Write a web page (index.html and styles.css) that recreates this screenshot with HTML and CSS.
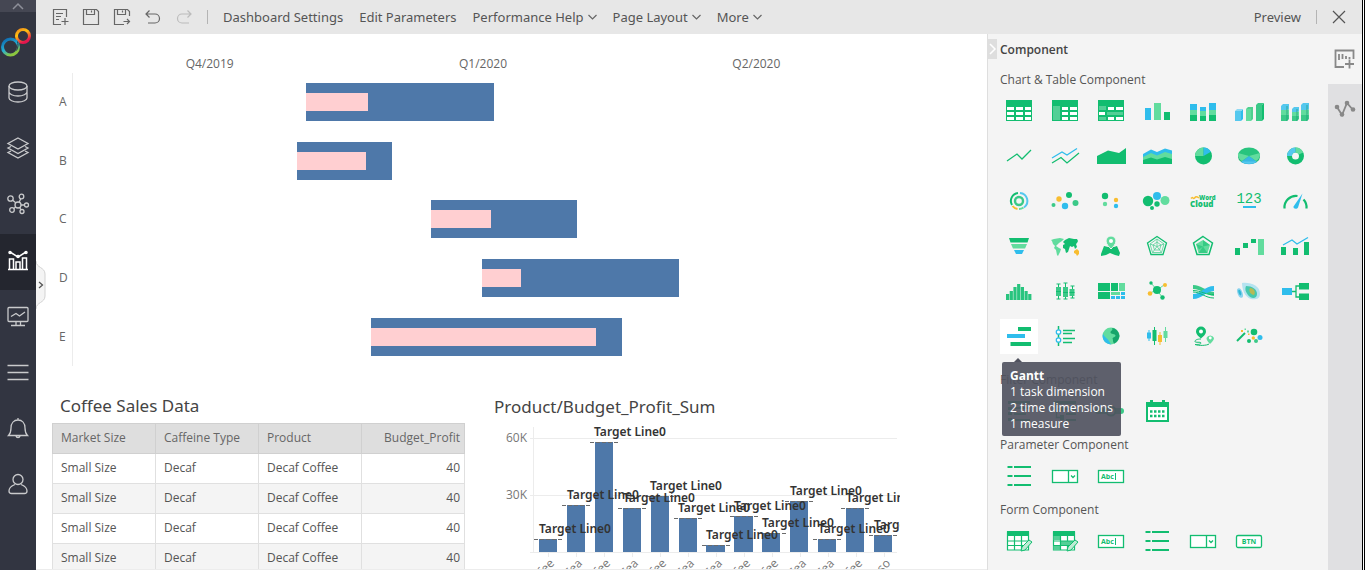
FILE: index.html
```
<!DOCTYPE html>
<html lang="en">
<head>
<meta charset="utf-8">
<title>Dashboard Editor</title>
<link rel="stylesheet" href="styles.css">
</head>
<body>
<div class="app">
  <nav class="sidebar" aria-label="Main">
    <button class="side-collapse" aria-label="Collapse"><svg width="14" height="8" viewBox="0 0 14 8"><path d="M2 7l5-5 5 5" fill="none" stroke="#8d8f99" stroke-width="1.5"/></svg></button>
    <a class="logo" href="#" aria-label="Home">
      <svg width="36" height="36" viewBox="0 0 36 36" fill="none">
        <defs>
          <linearGradient id="warm" x1="0" y1="0" x2=".5" y2="1"><stop offset="0" stop-color="#f08a1d"/><stop offset=".4" stop-color="#ffc20e"/><stop offset="1" stop-color="#e5154f"/></linearGradient>
          <linearGradient id="cool" x1="0" y1="0" x2=".5" y2="1"><stop offset="0" stop-color="#0d63ad"/><stop offset=".6" stop-color="#24b0d5"/><stop offset="1" stop-color="#8cc63f"/></linearGradient>
        </defs>
        <circle cx="23" cy="12" r="6.500" stroke="url(#warm)" stroke-width="3"/>
        <circle cx="10.500" cy="23" r="8" stroke="url(#cool)" stroke-width="3"/>
        <path d="M17.500 17.500c.8 2.500.8 6-1 9" stroke="#323541" stroke-width="1"/>
      </svg>
    </a>
    <a class="side-item" href="#" aria-label="Data source"><svg width="24" height="24" viewBox="0 0 24 24"><ellipse cx="12" cy="6" rx="9" ry="4"/><path d="M3 6v12c0 2 4 4 9 4s9-2 9-4V6M3 12c0 2 4 4 9 4s9-2 9-4"/></svg></a>
    <a class="side-item" href="#" aria-label="Data sets"><svg width="24" height="24" viewBox="0 0 24 24"><path d="M12 2l10 5.500-10 5.500L2 7.500zM5 10.500l-3 1.500 10 5.500L22 12l-3-1.500M5 15l-3 1.500L12 22l10-5.500-3-1.500"/></svg></a>
    <a class="side-item" href="#" aria-label="Mining"><svg width="24" height="24" viewBox="0 0 24 24"><circle cx="12" cy="13" r="3"/><circle cx="4.500" cy="6.500" r="2.700"/><circle cx="15.500" cy="4.500" r="2.300"/><circle cx="20.500" cy="13" r="2"/><circle cx="6" cy="18" r="2.300"/><circle cx="16" cy="19.500" r="2"/><path d="M6.700 8.300l3 2.500M14.700 6.800l-1.500 3.500M15 13h3.500M7.700 16.500l2-1.500M14.900 17.700L13.700 15.500"/></svg></a>
    <a class="side-item side-item--active" href="#" aria-label="Dashboards"><svg width="24" height="24" viewBox="0 0 24 24"><path d="M2 21.500h20M3.500 21V11h4v10M10 21v-7h4v7M16.500 21V10h4v11M4 4l8 5 8-5"/><circle cx="4" cy="4.500" r="1"/><circle cx="12" cy="8.500" r="1"/><circle cx="20" cy="4.500" r="1"/></svg></a>
    <a class="side-item" href="#" aria-label="Presentation"><svg width="24" height="24" viewBox="0 0 24 24"><rect x="2" y="3.500" width="20" height="14" rx="1"/><path d="M5 12.500l5-3 3.500 2.500L19 8M10 18v3M14.500 18v3M5 21.500h14"/></svg></a>
    <a class="side-item" href="#" aria-label="Menu"><svg width="24" height="24" viewBox="0 0 24 24"><path d="M1.500 5.500h21M1.500 12.500h21M1.500 19.500h21"/></svg></a>
    <a class="side-item" href="#" aria-label="Notifications"><svg width="24" height="24" viewBox="0 0 24 24"><path d="M2.500 19.500c2-2 2.500-3.500 2.500-7.500 0-5 3-8 7-8s7 3 7 8c0 4 .5 5.500 2.500 7.500zM10 20c.5 2 3.500 2 4 0M12 4V2"/></svg></a>
    <a class="side-item" href="#" aria-label="Account"><svg width="24" height="24" viewBox="0 0 24 24"><circle cx="12" cy="7.500" r="5"/><path d="M9 12.500c-4 1.500-6 4-6 6.500 0 1.500 1 2.500 2.500 2.500h13c1.500 0 2.500-1 2.500-2.500 0-2.500-2-5-6-6.500"/></svg></a>
    <button class="drawer" aria-label="Open drawer"><svg width="11" height="48" viewBox="0 0 11 48"><path d="M0 0c0 7 9 6 9 13v22c0 7-9 6-9 13" fill="#f4f4f4" stroke="#d2d2d2"/><path d="M3 21l3.500 3L3 27" fill="none" stroke="#555" stroke-width="1.300"/></svg></button>
  </nav>

  <div class="workspace">
    <header class="toolbar">
      <div class="tools">
        <button class="tool" aria-label="New"><svg width="18" height="18" viewBox="0 0 18 18"><path d="M15.500 9V1.500h-13v15H10M5 5.500h7M5 8.500h5M5 11.500h3M10.500 13.500h7M14 10v7"/></svg></button>
        <button class="tool" aria-label="Save"><svg width="18" height="18" viewBox="0 0 18 18"><path d="M1.500 1.500h13l2 2v13h-15zM4.500 1.500v5h8v-5M9.500 2.500v2"/></svg></button>
        <button class="tool" aria-label="Save as"><svg width="18" height="18" viewBox="0 0 18 18"><path d="M16.500 8V3.500l-2-2h-13v15H11M4.500 1.500v5h8v-5M9.500 2.500v2M10.500 13.500h6M14 11l2.500 2.500L14 16"/></svg></button>
        <button class="tool" aria-label="Undo"><svg width="18" height="18" viewBox="0 0 18 18"><path d="M5.500 2.500l-3.500 3.500 3.500 3.500M2 6h9a4.500 4.500 0 0 1 0 9H4"/></svg></button>
        <button class="tool tool--off" aria-label="Redo" disabled><svg width="18" height="18" viewBox="0 0 18 18"><path d="M12.500 2.500l3.500 3.500-3.500 3.500M16 6H7a4.500 4.500 0 0 0 0 9h7"/></svg></button>
      </div>
      <span class="rule"></span>
      <div class="menus">
        <button class="menu">Dashboard Settings</button>
        <button class="menu">Edit Parameters</button>
        <button class="menu">Performance Help <svg width="9" height="6" viewBox="0 0 9 6"><path d="M.5 1l4 4 4-4"/></svg></button>
        <button class="menu">Page Layout <svg width="9" height="6" viewBox="0 0 9 6"><path d="M.5 1l4 4 4-4"/></svg></button>
        <button class="menu">More <svg width="9" height="6" viewBox="0 0 9 6"><path d="M.5 1l4 4 4-4"/></svg></button>
      </div>
      <div class="toolbar-end">
        <button class="menu">Preview</button>
        <span class="rule"></span>
        <button class="close" aria-label="Close"><svg width="14" height="14" viewBox="0 0 14 14"><path d="M1 1l12 12M13 1L1 13" fill="none" stroke="#555" stroke-width="1.200"/></svg></button>
      </div>
    </header>

    <div class="editor">
      <main class="board">
        <section class="gantt" aria-label="Gantt chart">
          <div class="gantt-head"><span>Q4/2019</span><span>Q1/2020</span><span>Q2/2020</span></div>
          <div class="gantt-body">
            <div class="gantt-row"><span class="gantt-label">A</span><div class="track"><div class="bar" style="margin-left:28.4%;width:22.9%"><div class="done" style="width:33%"></div></div></div></div>
            <div class="gantt-row"><span class="gantt-label">B</span><div class="track"><div class="bar" style="margin-left:27.3%;width:11.6%"><div class="done" style="width:72.6%"></div></div></div></div>
            <div class="gantt-row"><span class="gantt-label">C</span><div class="track"><div class="bar" style="margin-left:43.7%;width:17.8%"><div class="done" style="width:41.1%"></div></div></div></div>
            <div class="gantt-row"><span class="gantt-label">D</span><div class="track"><div class="bar" style="margin-left:49.9%;width:24%"><div class="done" style="width:19.8%"></div></div></div></div>
            <div class="gantt-row"><span class="gantt-label">E</span><div class="track"><div class="bar" style="margin-left:36.3%;width:30.6%"><div class="done" style="width:90%"></div></div></div></div>
          </div>
        </section>

        <div class="widgets">
          <section class="sales">
            <h2 class="widget-title">Coffee Sales Data</h2>
            <table class="grid">
              <thead><tr><th>Market Size</th><th>Caffeine Type</th><th>Product</th><th class="num">Budget_Profit</th></tr></thead>
              <tbody>
                <tr><td>Small Size</td><td>Decaf</td><td>Decaf Coffee</td><td class="num">40</td></tr>
                <tr><td>Small Size</td><td>Decaf</td><td>Decaf Coffee</td><td class="num">40</td></tr>
                <tr><td>Small Size</td><td>Decaf</td><td>Decaf Coffee</td><td class="num">40</td></tr>
                <tr><td>Small Size</td><td>Decaf</td><td>Decaf Coffee</td><td class="num">40</td></tr>
              </tbody>
            </table>
          </section>

          <section class="profit">
            <h2 class="widget-title">Product/Budget_Profit_Sum</h2>
            <svg class="chart" viewBox="0 0 406 146" role="img" aria-label="Budget profit by product">
              <path d="M36 14.500H403M36 71.500H403M36 128.500H403M39.500 3V128" stroke="#ececec" fill="none"/>
              <path d="M54.500 129v4m28-4v4m28-4v4m28-4v4m28-4v4m28-4v4m28-4v4m28-4v4m28-4v4m28-4v4m28-4v4m28-4v4m28-4v4" stroke="#ececec" fill="none"/>
              <g class="axis" text-anchor="end"><text x="33" y="18">60K</text><text x="33" y="75">30K</text></g>
              <g fill="#4e78a9">
                <rect x="45" y="115" width="18" height="13"/><rect x="73" y="81" width="18" height="47"/><rect x="101" y="18" width="18" height="110"/><rect x="129" y="84" width="18" height="44"/><rect x="157" y="72" width="18" height="56"/><rect x="185" y="94" width="18" height="34"/><rect x="212" y="121" width="19" height="7"/><rect x="240" y="92" width="19" height="36"/><rect x="268" y="109" width="18" height="19"/><rect x="296" y="77" width="18" height="51"/><rect x="324" y="115" width="18" height="13"/><rect x="352" y="84" width="18" height="44"/><rect x="380" y="111" width="18" height="17"/>
              </g>
              <path d="M40 115.500h28M68 81.500h28M96 18.500h28M124 84.500h28M152 72.500h28M180 94.500h28M208 121.500h28M236 92.500h28M264 109.500h28M291 77.500h28M319 115.500h28M347 84.500h28M375 111.500h28" stroke="#6b6b6b" stroke-dasharray="4 2" fill="none"/>
              <g class="target">
                <text x="45" y="109">Target Line0</text><text x="73" y="75">Target Line0</text><text x="100" y="12">Target Line0</text><text x="129" y="78">Target Line0</text><text x="156" y="66">Target Line0</text><text x="184" y="88">Target Line0</text><text x="212" y="115">Target Line0</text><text x="240" y="86">Target Line0</text><text x="268" y="103">Target Line0</text><text x="296" y="71">Target Line0</text><text x="324" y="109">Target Line0</text><text x="352" y="78">Target Line0</text><text x="380" y="105">Target Line0</text>
              </g>
              <g class="axis" text-anchor="end" transform="translate(1 -3)">
                <text transform="translate(60 143) rotate(-45)">Coffee</text><text transform="translate(88 143) rotate(-45)">Tea</text><text transform="translate(116 143) rotate(-45)">Coffee</text><text transform="translate(144 143) rotate(-45)">Tea</text><text transform="translate(172 143) rotate(-45)">Coffee</text><text transform="translate(200 143) rotate(-45)">Tea</text><text transform="translate(228 143) rotate(-45)">Tea</text><text transform="translate(256 143) rotate(-45)">Coffee</text><text transform="translate(284 143) rotate(-45)">Coffee</text><text transform="translate(312 143) rotate(-45)">Tea</text><text transform="translate(340 143) rotate(-45)">Tea</text><text transform="translate(368 143) rotate(-45)">Coffee</text><text transform="translate(396 143) rotate(-45)">Espresso</text>
              </g>
            </svg>
          </section>
        </div>
      </main>

      <aside class="panel">
        <button class="panel-fold" aria-label="Fold panel"><svg width="9" height="20" viewBox="0 0 9 20"><path d="M2 5l5 5-5 5" fill="none" stroke="#fff" stroke-width="1.500"/></svg></button>
        <h2 class="panel-title">Component</h2>

        <section class="group group--charts">
          <h3 class="group-title">Chart &amp; Table Component</h3>
          <div class="icons">
            <button class="cell" aria-label="Table"><svg viewBox="0 0 38 35"><path class="g" d="M6 6h26v21H6z"/><path fill="#fff" d="M7 13h7v3H7zm9 0h7v3h-7zm9 0h6v3h-6zM7 18h7v3H7zm9 0h7v3h-7zm9 0h6v3h-6zM7 23h7v3H7zm9 0h7v3h-7zm9 0h6v3h-6z"/></svg></button>
            <button class="cell" aria-label="Crosstab"><svg viewBox="0 0 38 35"><path class="g" d="M6 6h26v21H6z"/><path fill="#53cf96" d="M7 12h7v14H7z"/><path fill="#fff" d="M16 13h6v3h-6zm8 0h7v3h-7zM16 18h6v3h-6zm8 0h7v3h-7zM16 23h6v3h-6zm8 0h7v3h-7z"/></svg></button>
            <button class="cell" aria-label="Free-form table"><svg viewBox="0 0 38 35"><path class="g" d="M6 6h26v21H6z"/><path fill="#53cf96" d="M7 12h7v4H7zM15 18h16v3H15zM7 23h7v3H7z"/><path fill="#fff" d="M16 13h6v3h-6zm8 0h7v3h-7zM7 18h6v3H7zM16 23h6v3h-6zm8 0h7v3h-7z"/></svg></button>
            <button class="cell" aria-label="Bar"><svg viewBox="0 0 38 35"><path class="b" d="M7 14h6v12H7z"/><path class="l" d="M16 9h7v17h-7z"/><path class="g" d="M26 18h6v8h-6z"/></svg></button>
            <button class="cell" aria-label="Stacked bar"><svg viewBox="0 0 38 35"><path class="b" d="M6 10h7v6H6zM16 13h6v4h-6zM25 9h7v7h-7z"/><path class="l" d="M6 16h7v5H6zM16 17h6v5h-6zM25 16h7v5h-7z"/><path class="g" d="M6 21h7v6H6zM16 22h6v5h-6zM25 21h7v6h-7z"/></svg></button>
            <button class="cell" aria-label="3D bar"><svg viewBox="0 0 38 35"><path fill="#55c8ee" d="M5 17h6v10H5z"/><path class="b" d="M11 17l2-2v10l-2 2z"/><path fill="#8ed9f3" d="M5 17l2-2h6l-2 2z"/><path class="l" d="M16 15h5v12h-5z"/><path fill="#4fd08f" d="M21 15l2-2v12l-2 2zM16 15l2-2h5l-2 2z"/><path fill="#3bc988" d="M26 11h6v16h-6zM26 11l2-2h6l-2 2z"/><path class="g" d="M32 11l2-2v16l-2 2z"/></svg></button>
            <button class="cell" aria-label="3D stacked bar"><svg viewBox="0 0 38 35"><path fill="#3bc988" d="M5 21h6l2-1v5l-2 2H5zM16 22h5l2-1v4l-2 2h-5zM25 21h6l2-1v5l-2 2h-6z"/><path class="l" d="M5 16h6l2-1v5l-2 1H5zM16 18h5l2-1v4l-2 1h-5zM25 16h6l2-1v5l-2 1h-6z"/><path fill="#55c8ee" d="M5 12l2-2h6v5l-2 1H5zM16 15l2-2h5v4l-2 1h-5zM25 11l2-2h6v6l-2 1h-6z"/><path fill="none" stroke="#119b77" stroke-width=".7" d="M11 12v15M21 15v12M31 11v16"/></svg></button>

            <button class="cell" aria-label="Line"><svg viewBox="0 0 38 35"><path class="gs" d="M7 22l10-7 5 5 9-9"/></svg></button>
            <button class="cell" aria-label="Multi-line"><svg viewBox="0 0 38 35"><path class="bs" d="M6 19l10-6 5 3 10-6.500"/><path class="gs" d="M6 24l9-5.500 6 5.500 12-10"/></svg></button>
            <button class="cell" aria-label="Area"><svg viewBox="0 0 38 35"><path class="g" d="M5 17l11-5.500 11 2.500 7-5v16H5z"/></svg></button>
            <button class="cell" aria-label="Stacked area"><svg viewBox="0 0 38 35"><path class="b" d="M5 15l8-4.500 6 2.500 8-3.500 7 2v13H5z"/><path class="l" d="M5 18l8-4 6 2.500 8-3.500 7 2V25H5z"/><path class="g" d="M5 21l8-2.500 6 2 8-2.500 7 2v5H5z"/></svg></button>
            <button class="cell" aria-label="Pie"><svg viewBox="0 0 38 35"><circle class="g" cx="19.500" cy="17" r="8.500"/><path class="l" d="M19.500 17H11a8.500 8.500 0 0 1 8.500-8.500z"/><path class="b" d="M19.500 17V8.500a8.500 8.500 0 0 1 7.400 4.300z"/></svg></button>
            <button class="cell" aria-label="3D pie"><svg viewBox="0 0 38 35"><ellipse fill="#28b777" cx="19" cy="18" rx="11" ry="7"/><ellipse fill="#28c47e" cx="19" cy="16" rx="11" ry="7.500"/><path class="l" d="M19 17l11-3c.5 4-2 7-4 8zM19 17L8 14c-.5 4 2 7 4 8z"/><path fill="#38b7e3" d="M19 17l8 6c-5 3-11 3-16 0z"/><path fill="#55c8ee" d="M11.500 22.500h15c-4 3-11 3-15 0z"/></svg></button>
            <button class="cell" aria-label="Donut"><svg viewBox="0 0 38 35" fill="none" stroke-width="5"><circle cx="19.500" cy="17" r="6" stroke="#12bd70"/><path d="M19.500 11a6 6 0 0 1 5.500 3.500" stroke="#62dc9e"/><path d="M13.500 17a6 6 0 0 1 6-6" stroke="#55c8ee"/></svg></button>

            <button class="cell" aria-label="Sunburst"><svg viewBox="0 0 38 35" fill="none"><circle cx="19" cy="17" r="4" stroke="#3bc988" stroke-width="2.400"/><path d="M18 9a8 8 0 0 0-6 12" stroke="#12bd70" stroke-width="2"/><path d="M20 9a8 8 0 0 1 4 14.500" stroke="#55c8ee" stroke-width="2"/><path d="M12.500 22a8 8 0 0 0 5 3" stroke="#f8bd30" stroke-width="2"/><path d="M19 25a8 8 0 0 0 4.500-1.500" stroke="#62dc9e" stroke-width="2"/></svg></button>
            <button class="cell" aria-label="Scatter"><svg viewBox="0 0 38 35"><circle fill="#3bc988" cx="7.500" cy="21" r="2"/><circle class="y" cx="13" cy="15" r="2.700"/><circle class="g" cx="23" cy="11" r="3"/><circle class="b" cx="19" cy="22" r="3.200"/><circle fill="#3bc988" cx="29.500" cy="19" r="3"/></svg></button>
            <button class="cell" aria-label="Dot plot"><svg viewBox="0 0 38 35"><circle class="g" cx="13" cy="12" r="3.200"/><circle class="l" cx="13" cy="20" r="2.200"/><circle class="y" cx="24" cy="16" r="2.200"/><circle class="b" cx="24" cy="22" r="2.200"/></svg></button>
            <button class="cell" aria-label="Bubble"><svg viewBox="0 0 38 35"><circle class="g" cx="10" cy="17" r="5.200"/><circle class="b" cx="19" cy="12" r="4"/><circle class="l" cx="27" cy="16.500" r="4.500"/><circle class="g" cx="19" cy="20" r="2.700"/><circle class="g" cx="14" cy="24" r="2"/></svg></button>
            <button class="cell" aria-label="Word cloud"><svg viewBox="0 0 38 35"><path d="M7 14.500q1-1.500 2-.5t2-.5 4 .5" fill="none" stroke="#f8bd30" stroke-width="1.500"/><text class="word" x="15" y="16" font-size="6">Word</text><text class="word" x="6" y="23" font-size="8">Cloud</text></svg></button>
            <button class="cell" aria-label="KPI"><svg viewBox="0 0 38 35"><text class="kpi" x="19" y="19" text-anchor="middle">123</text><path class="b" d="M13 22h13v2H13z"/></svg></button>
            <button class="cell" aria-label="Gauge"><svg viewBox="0 0 38 35"><path d="M8.500 24.500a11.500 11.500 0 0 1 13-12.500M27.500 15.500a11.500 11.500 0 0 1 3 9" fill="none" stroke="#12bd70" stroke-width="2.200"/><path class="b" d="M26.500 9.500L22 23.500c-1 2-5 1.500-4.500-1z"/></svg></button>

            <button class="cell" aria-label="Funnel"><svg viewBox="0 0 38 35"><path class="g" d="M9 9h20l-1.500 4.500h-17z"/><path class="l" d="M11 15h16l-2 4.500H13z"/><path class="b" d="M14 21h10l-2 4h-6z"/></svg></button>
            <button class="cell" aria-label="World map"><svg viewBox="0 0 38 35"><path class="l" d="M5 11l3-1 6-1 4 1-2 2-3 2-2 2-1 1 3 2 2 1-1 3-2 4-1-1-1-5-2-2 1-2-2-2-1-3z"/><path class="g" d="M17 13l2-2 4-2 5 1 3 0 1 2-1 2-1 1 1 3-2 2-1-3-2 1-2-1-1 3-1 3-2 1-1-4-2-1v-3l2-1z"/><path class="y" d="M28 22l3-2 2 2v3l-2 2-1-2-2-1z"/></svg></button>
            <button class="cell" aria-label="Map"><svg viewBox="0 0 38 35"><path class="g" d="M12 17l4 1 6 0 3-1 3 7-1 3-4-1-5-2-4 2-5 1v-2z"/><path d="M14 12a5 5 0 0 1 10 0c0 3-3 6-5 8-2-2-5-5-5-8z" fill="#62dc9e" stroke="#f4f4f4"/><circle cx="19" cy="12" r="2" fill="#fff"/></svg></button>
            <button class="cell" aria-label="Radar"><svg viewBox="0 0 38 35" fill="none" stroke="#12bd70"><path d="M19 7.500l9.500 6.500-3.500 11.500H13L9.500 14z" stroke-width="1.300"/><path d="M19 10l7 5-2.500 8.500h-9L12 15zM19 13l4 3-1.500 5h-5L15 16zM19 10v7.500l7-2.500M19 17.500l4.500 6M19 17.500l-4.500 6M19 17.500L12 15" stroke="#53cf96" stroke-width=".8"/></svg></button>
            <button class="cell" aria-label="Filled radar"><svg viewBox="0 0 38 35"><path d="M19 7.500l9.500 6.500-3.500 11.500H13L9.500 14z" fill="none" stroke="#12bd70" stroke-width="1.500"/><path fill="#62dc9e" d="M19 11l7 5-2.500 8h-9L12 15z"/><path class="g" d="M19 11l7 5-7 1.500zM19 17.500l4.500 6.500h-9zM12 15l7 2.500-4 3z" opacity=".55"/></svg></button>
            <button class="cell" aria-label="Waterfall"><svg viewBox="0 0 38 35"><path class="g" d="M5 19h5v7H5zM13 14h5v5h-5zM21 10h5v4h-5z"/><path class="l" d="M28 10h6v16h-6z"/></svg></button>
            <button class="cell" aria-label="Combination"><svg viewBox="0 0 38 35"><path class="g" d="M5 18h5v8H5zM17 19h5v7h-5zM28 13h5v13h-5z"/><path class="bs" d="M7 16l9-5 5 4 11-6.500"/></svg></button>

            <button class="cell" aria-label="Histogram"><svg viewBox="0 0 38 35"><path fill="#28c47e" d="M6 20h3.200v6H6zM9.700 17h3.200v9H9.700zM13.400 13h3.200v13h-3.200zM17.100 10h3.200v16h-3.200zM20.800 13H24v13h-3.200zM24.500 17h3.200v9h-3.200zM28.200 20h3.200v6h-3.200z"/></svg></button>
            <button class="cell" aria-label="Box plot"><svg viewBox="0 0 38 35"><path d="M10.500 10h4M10.500 25h4M12.500 10v15M17.500 9h4M17.500 25h4M19.500 9v16M24.500 12h4M24.500 24h4M26.500 12v12" fill="none" stroke="#12bd70"/><path fill="#3bc988" d="M10 13h5v9h-5zM17 13h5v10h-5zM23.500 15h5v7h-5z"/><path d="M10 17.500h5M17 18.500h5M23.500 18.500h5" stroke="#12bd70"/></svg></button>
            <button class="cell" aria-label="Treemap"><svg viewBox="0 0 38 35"><path class="g" d="M6 9h12v8H6zM19 9h7v8h-7zM6 18h12v7H6z"/><path class="l" d="M27 9h6v8h-6zM19 18h9v3h-9z"/><path class="b" d="M29 18h4v3h-4zM19 22h4v3h-4zM24 22h4v3h-4zM29 22h4v3h-4z"/></svg></button>
            <button class="cell" aria-label="Network"><svg viewBox="0 0 38 35"><path d="M13 9l6 7 7-5M12 19l7-3 5 7" fill="none" stroke="#62dc9e"/><circle class="g" cx="19" cy="16" r="4"/><circle class="g" cx="13" cy="9" r="1.700"/><circle class="y" cx="27" cy="11" r="2"/><circle class="y" cx="12" cy="19.500" r="2.300"/><circle class="g" cx="24.500" cy="23.500" r="2.200"/></svg></button>
            <button class="cell" aria-label="Sankey"><svg viewBox="0 0 38 35"><path fill="#3bc988" d="M9 11c8 0 13 6 21 7v4C22 21 17 15 9 15z"/><path class="b" d="M9 20c8 0 12-8 21-8v5c-8 0-12 8-21 8z"/><path d="M9 18c8 0 12 6 21 6M9 16.500c8 0 14 5 21 4" fill="none" stroke="#12bd70"/></svg></button>
            <button class="cell" aria-label="Contour"><svg viewBox="0 0 38 35"><path fill="#b5e3f0" d="M12 9c8-1 18 2 18 11 0 5-5 6-9 5-7-2-9-11-9-16z"/><path fill="#45c8ad" d="M16 12c6 0 11 3 11 8s-6 5-9 1-3-6-2-9z"/><path fill="#b5ba55" d="M20 14c4 0 6 4 4 7-3 0-6-4-4-7z"/><ellipse cx="10" cy="19" rx="2.500" ry="5" fill="#8bd3ee" transform="rotate(-20 10 19)"/><ellipse cx="10" cy="18.500" rx="1.300" ry="3" fill="#30b8d5" transform="rotate(-20 10 19)"/></svg></button>
            <button class="cell" aria-label="Tree"><svg viewBox="0 0 38 35"><path class="gs" d="M16 17.500h4M24 12h-4v11h4"/><path class="b" d="M6 14h10v7H6z"/><path class="g" d="M23 9h10v6.500H23zM23 19.500h10V26H23z"/></svg></button>

            <button class="cell cell--active" aria-label="Gantt" aria-describedby="tip"><svg viewBox="0 0 38 35"><path class="g" d="M18 8h13v4H18zM10.500 23H31v4H10.500z"/><path class="b" d="M7 15h18v4H7z"/></svg></button>
            <button class="cell" aria-label="Timeline"><svg viewBox="0 0 38 35"><path d="M12.500 7v20" stroke="#12bd70" stroke-width="1.500"/><path d="M17 11.500h12M17 14.500h9M17 19.500h12M17 23.500h9" stroke="#12bd70" stroke-width="1.300"/><g fill="#fff" stroke="#2fbdec" stroke-width="1.300"><circle cx="12.500" cy="13" r="2.200"/><circle cx="12.500" cy="21" r="2.200"/></g></svg></button>
            <button class="cell" aria-label="Globe"><svg viewBox="0 0 38 35"><circle class="l" cx="19" cy="17" r="8.500"/><path class="b" d="M11 14.500c1 4 5 4 8 11-6-1-9.500-5-8-11z"/><path fill="#16a56b" d="M20 9c4 0 7 4 7.500 8-.5 3-2 6-5 7.500-2-1-1-3-2-5 1-2 3-1 3-3s-5-1-5-3 3-2 1.500-4.500z"/></svg></button>
            <button class="cell" aria-label="Candlestick"><svg viewBox="0 0 38 35"><path class="b" d="M10.500 11h1v11h-1zM9 13.500h4v6H9z"/><path class="g" d="M16 8h1v18h-1zM14.500 11h4v11h-4z"/><path class="y" d="M21.500 13h1v13h-1zM20 16h4v7h-4z"/><path class="l" d="M27 8h1v15h-1zM25.500 12h4v7h-4z"/></svg></button>
            <button class="cell" aria-label="Route map"><svg viewBox="0 0 38 35"><path d="M12 12.500a5 5 0 0 1 10 0c0 3-3 5-5 7-2-2-5-4-5-7z" class="g"/><circle cx="17" cy="12.500" r="2" fill="#fff"/><path d="M22.500 19a4 4 0 0 1 7.500 0c0 2-2 4-4 6-2-2-3.500-4-3.500-6z" class="l"/><circle cx="26.300" cy="19" r="1.400" fill="#fff"/><path d="M17 20c-4 0-6 1-6 2.500s6 0 6 1.500-4 1.500-6 1.500c4 1.500 12 1 14-.5" fill="none" stroke="#12bd70"/></svg></button>
            <button class="cell" aria-label="Custom chart"><svg viewBox="0 0 38 35"><path d="M7 22l8-8" stroke="#12bd70" stroke-width="2"/><path class="y" d="M11 11h2v2h-2zM18 14.500h1.500V16H18z"/><path class="l" d="M14.500 9.500H16V11h-1.500zM17 11.500h2v2h-2z"/><circle class="g" cx="24" cy="13" r="3.300"/><circle class="y" cx="23.300" cy="19" r="1.700"/><circle class="b" cx="30" cy="18.500" r="2.500"/><circle class="g" cx="19" cy="22" r="2"/><circle fill="#3bc988" cx="26" cy="22" r="2"/></svg></button>
          </div>
          <div class="tip" id="tip" role="tooltip"><strong>Gantt</strong><br>1 task dimension<br>2 time dimensions<br>1 measure</div>
        </section>

        <section class="group">
          <h3 class="group-title">Filter Component</h3>
          <div class="icons">
            <button class="cell" aria-label="List filter"><svg viewBox="0 0 38 35"><path class="g" d="M8 7h22v3H8zM8 13h4v3H8zM14 13h16v2H14zM8 18h4v3H8zM14 19h12v2H14zM8 24h4v3H8zM14 25h16v2H14z"/></svg></button>
            <button class="cell" aria-label="Tree filter"><svg viewBox="0 0 38 35"><path class="g" d="M8 7h22v3H8zM18 14h12v2H18zM20 19h10v2H20zM20 25h10v2H20z"/><path class="gs" d="M10.500 10v13.500H15M10.500 15H15"/><path class="g" d="M14 13h3v4h-3zM14 21h4v5h-4z"/></svg></button>
            <button class="cell" aria-label="Range slider"><svg viewBox="0 0 38 35"><path d="M6 17h23" stroke="#3bc988" stroke-width="6" stroke-linecap="round"/><circle cx="19" cy="17" r="4.500" fill="#f4f4f4" stroke="#12bd70" stroke-width="2"/></svg></button>
            <button class="cell" aria-label="Date filter"><svg viewBox="0 0 38 35"><path d="M9 9h21v18H9z" fill="#fff" stroke="#12bd70" stroke-width="2"/><path class="g" d="M8 8h23v5H8zM12 6h3v4h-3zM24 6h3v4h-3z"/><path d="M12 17.500h15M12 22h15" stroke="#12bd70" stroke-width="2.500" stroke-dasharray="2.500 1.500"/></svg></button>
          </div>
        </section>

        <section class="group">
          <h3 class="group-title">Parameter Component</h3>
          <div class="icons">
            <button class="cell" aria-label="List parameter"><svg viewBox="0 0 38 35"><path d="M7.500 8h5M14 8h17M7.500 17h5M14 17h17M7.500 26h5M14 26h17" stroke="#12bd70" stroke-width="2"/></svg></button>
            <button class="cell" aria-label="Drop-down parameter"><svg viewBox="0 0 38 35"><rect x="6.500" y="11.500" width="25" height="12" fill="#fff" stroke="#12bd70" stroke-width="1.300"/><path d="M22.500 11.500v12M25 16.500l2 2 2-2" fill="none" stroke="#12bd70" stroke-width="1.300"/></svg></button>
            <button class="cell" aria-label="Text parameter"><svg viewBox="0 0 38 35"><rect x="6.500" y="11.500" width="25" height="12" fill="#fff" stroke="#12bd70" stroke-width="1.300"/><text class="tiny" x="9" y="20">Abc</text><path d="M23.500 14v7" stroke="#12bd70"/></svg></button>
          </div>
        </section>

        <section class="group">
          <h3 class="group-title">Form Component</h3>
          <div class="icons">
            <button class="cell" aria-label="Form table"><svg viewBox="0 0 38 35"><path d="M7.500 8h21v18h-21zM14.500 12v14M21.500 12v14M7.500 17h21M7.500 21.500h21" fill="#fff" stroke="#12bd70" stroke-width="1.200"/><path class="g" d="M7 7h22v5H7z"/><path d="M21 27l1-4 7-7 3 2-7 8z" fill="#bdebd4" stroke="#12bd70"/></svg></button>
            <button class="cell" aria-label="Free form"><svg viewBox="0 0 38 35"><path d="M7.500 8h21v18h-21z" fill="#fff" stroke="#12bd70" stroke-width="1.200"/><path fill="#53cf96" d="M7.500 12H14v4H7.500zM14 17h14v4H14zM7.500 22H14v4H7.500z"/><path d="M14.500 12v14M21.500 12v5M21.500 21v5M7.500 17h21M7.500 21.500h21" fill="none" stroke="#12bd70" stroke-width="1.200"/><path class="g" d="M7 7h22v5H7z"/><path d="M21 27l1-4 7-7 3 2-7 8z" fill="#bdebd4" stroke="#12bd70"/></svg></button>
            <button class="cell" aria-label="Text field"><svg viewBox="0 0 38 35"><rect x="6.500" y="11.500" width="25" height="12" fill="#fff" stroke="#12bd70" stroke-width="1.300"/><text class="tiny" x="9" y="20">Abc</text><path d="M23.500 14v7" stroke="#12bd70"/></svg></button>
            <button class="cell" aria-label="List field"><svg viewBox="0 0 38 35"><path d="M7.500 8h5M14 8h17M7.500 17h5M14 17h17M7.500 26h5M14 26h17" stroke="#12bd70" stroke-width="2"/></svg></button>
            <button class="cell" aria-label="Drop-down field"><svg viewBox="0 0 38 35"><rect x="6.500" y="11.500" width="25" height="12" fill="#fff" stroke="#12bd70" stroke-width="1.300"/><path d="M22.500 11.500v12M25 16.500l2 2 2-2" fill="none" stroke="#12bd70" stroke-width="1.300"/></svg></button>
            <button class="cell" aria-label="Button"><svg viewBox="0 0 38 35"><rect x="6.500" y="11.500" width="25" height="12" rx="1.500" fill="#fff" stroke="#12bd70" stroke-width="1.300"/><text class="tiny" x="19" y="20" text-anchor="middle">BTN</text></svg></button>
          </div>
        </section>
      </aside>

      <div class="tabs">
        <button class="tab tab--active" aria-label="Components"><svg width="22" height="20" viewBox="0 0 22 20"><path d="M10 18H1.500V1.500h18V10M5 5v6M8.500 5v5M12 7v3M15.500 8v2M11 15h9M15.500 10.500v9"/></svg></button>
        <button class="tab" aria-label="Binding"><svg width="22" height="20" viewBox="0 0 22 20"><path d="M3 8l5 8 5-12 6 7"/><g fill="#888" stroke="none"><circle cx="3" cy="8" r="2.300"/><circle cx="8" cy="15.500" r="2.300"/><circle cx="13" cy="4" r="2.300"/><circle cx="19" cy="10.500" r="2.300"/></g></svg></button>
      </div>
    </div>
  </div>
</div>
</body>
</html>
```

FILE: styles.css
```
* { box-sizing: border-box; }

body {
  margin: 0;
  font: 12px/16px "Open Sans", "Noto Sans", sans-serif;
  color: #555;
  background: #fff;
}

button {
  margin: 0;
  padding: 0;
  border: 0;
  background: none;
  font: inherit;
  color: inherit;
  cursor: pointer;
}

h2, h3 { margin: 0; font-weight: 400; }
svg { display: block; }

.app {
  display: flex;
  height: 100vh;
  overflow: hidden;
  border-right: 1px solid #fff;
  box-shadow: inset -1px 0 #000, inset -2px 0 #fff, inset -3px 0 #000;
  padding-right: 3px;
}

/* Sidebar */
.sidebar {
  position: relative;
  flex: none;
  width: 36px;
  background: #323541;
}
.side-collapse {
  display: flex;
  width: 100%;
  height: 12px;
  align-items: center;
  justify-content: center;
  background: #454753;
}
.logo { display: block; padding: 12px 0 6px; }
.side-item {
  display: flex;
  height: 56px;
  padding-bottom: 4px;
  align-items: center;
  justify-content: center;
}
.side-item svg { fill: none; stroke: #c9cacc; stroke-width: 1.3; }
.side-item--active { background: #24262f; }
.side-item--active svg { stroke: #fff; stroke-width: 1.5; }
.drawer { position: absolute; left: 36px; top: 261px; z-index: 2; }

/* Toolbar */
.workspace { flex: 1; min-width: 0; display: flex; flex-direction: column; }
.toolbar {
  flex: none;
  display: flex;
  align-items: center;
  height: 34px;
  padding: 0 16px 0 8px;
  background: #e7e7e7;
  font: 13px/16px "Noto Sans", "Open Sans", sans-serif;
}
.tools { display: flex; }
.tool { display: flex; width: 31px; height: 34px; align-items: center; justify-content: center; }
.tool svg { fill: none; stroke: #666; stroke-width: 1.2; }
.tool--off svg { stroke: #bcbcbc; }
.rule { width: 1px; height: 14px; background: #b4b4b4; }
.tools + .rule { margin: 0 15px 0 8px; }
.menus { display: flex; gap: 16px; }
.menu { display: flex; align-items: center; gap: 4px; white-space: nowrap; }
.menu svg { fill: none; stroke: #666; stroke-width: 1.2; }
.toolbar-end { display: flex; align-items: center; gap: 15px; margin-left: auto; }

.editor { flex: 1; min-height: 0; display: flex; }

/* Board */
.board {
  flex: 1;
  min-width: 0;
  overflow: hidden;
  border-bottom: 1px solid #ececec;
}
.gantt { padding: 20px 94px 0 20px; }
.gantt-head {
  display: grid;
  grid-template-columns: repeat(3, 1fr);
  height: 19px;
  line-height: 20px;
  margin-left: 17px;
  text-align: center;
  color: #666;
}
.gantt-body {
  display: grid;
  grid-template-rows: repeat(5, 1fr);
  height: 293px;
  background: linear-gradient(#ececec, #ececec) 16px 0 / 1px 100% no-repeat;
}
.gantt-row { display: grid; grid-template-columns: 17px 1fr; align-items: center; }
.gantt-label { padding-left: 3px; color: #666; }
.bar { display: flex; align-items: center; height: 38px; background: #4e78a9; }
.done { height: 18px; background: #ffcfd1; }

.widgets { display: flex; gap: 29px; padding: 28px 87px 0 16px; }
.sales { flex: 413; min-width: 0; }
.profit { flex: 406; min-width: 0; }
.widget-title {
  font: 17px/24px "Noto Sans", "Open Sans", sans-serif;
  color: #444;
  white-space: nowrap;
}
.sales .widget-title { padding-left: 8px; margin-bottom: 5px; }
.profit .widget-title { margin-top: 1px; margin-bottom: 5px; }

.grid { width: 100%; table-layout: fixed; border-collapse: collapse; }
.grid th, .grid td {
  height: 30px;
  padding: 0 4px 2px 8px;
  border: 1px solid #e0e0e0;
  font-weight: 400;
  text-align: left;
  white-space: nowrap;
}
.grid th { background: #dedede; border-color: #d0d0d0; color: #666; }
.grid tbody tr:nth-child(even) { background: #f4f4f4; }
.grid .num { text-align: right; }

.chart { width: 100%; overflow: hidden; }
.chart text { font-size: 12px; }
.axis { fill: #777; }
.target { fill: #333; font-family: "Noto Sans", sans-serif; font-weight: 600; }

/* Component panel */
.panel {
  position: relative;
  flex: none;
  width: 341px;
  padding: 6px 12px 0;
  border-left: 1px solid #dedede;
  background: #f4f4f4;
}
.panel-fold { position: absolute; left: 0; top: 5px; background: #dedede; }
.panel-title { font-size: 12px; font-weight: 600; line-height: 20px; color: #444; }
.group { position: relative; margin-bottom: 6px; }
.group--charts { margin: 10px 0 16px; }
.group-title { margin-bottom: 4px; font-size: 12px; line-height: 20px; }
.icons { display: grid; grid-template-columns: repeat(7, 38px); gap: 10px 8px; }
.cell { height: 35px; }
.cell svg { width: 38px; height: 35px; }
.cell--active { background: #fff; }
.g { fill: #12bd70; }
.l { fill: #62dc9e; }
.b { fill: #2fbdec; }
.y { fill: #f8bd30; }
.gs, .bs { fill: none; stroke: #12bd70; stroke-width: 1.3; }
.bs { stroke: #2fbdec; }
.word { fill: #12bd70; font-weight: 800; }
.kpi { fill: #12bd70; font: 14px "Liberation Mono", monospace; }
.tiny { fill: #12bd70; font-size: 7px; font-weight: 700; }

.tip {
  position: absolute;
  left: 2px;
  top: 292px;
  z-index: 3;
  padding: 6px 8px 4px;
  border-radius: 2px;
  background: rgba(80, 82, 95, .92);
  color: #fff;
  white-space: nowrap;
}
.tip::before {
  content: "";
  position: absolute;
  left: 12px;
  top: -4px;
  border: 4px solid transparent;
  border-top: 0;
  border-bottom-color: #50525f;
}

.tabs { flex: none; width: 34px; background: #e0e0e2; }
.tab { display: flex; width: 100%; height: 50px; align-items: center; justify-content: center; }
.tab svg { fill: none; stroke: #888; stroke-width: 1.8; }
.tab--active { background: #f4f4f4; }
```
